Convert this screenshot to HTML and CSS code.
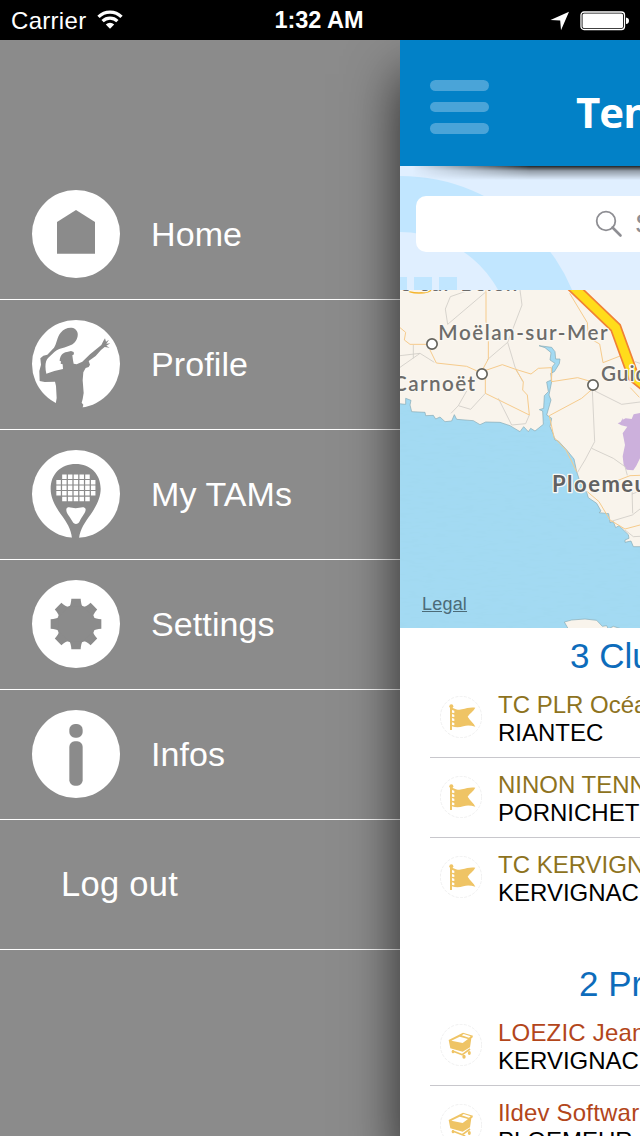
FILE: index.html
```
<!DOCTYPE html>
<html lang="en">
<head>
    <meta charset="UTF-8">
    <meta name="viewport" content="width=device-width, initial-scale=1.0">
    <title>Menu</title>
    <link rel="stylesheet" href="styles.css">
</head>
<body>
    <!-- Status bar -->
    <div class="status-bar">
        <div class="carrier">
            <span>Carrier</span>
            <svg width="26" height="20" viewBox="0 0 26 20">
                <path d="M1.5 6.8a16.3 16.3 0 0 1 23 0" fill="none" stroke="#fff" stroke-width="3.3"/>
                <path d="M5.6 11.2a10.6 10.6 0 0 1 14.8 0" fill="none" stroke="#fff" stroke-width="3.2"/>
                <path d="M8.8 14.5a6 6 0 0 1 8.4 0L13 18.8z" fill="#fff"/>
            </svg>
        </div>
        <span class="time">1:32 AM</span>
        <div class="indicators">
            <svg width="20" height="20" viewBox="0 0 20 20"><path d="M19 .8L.5 9l9.7.6.8 9.7z" fill="#fff"/></svg>
            <svg width="50" height="20" viewBox="0 0 50 20">
                <rect x="1" y="1" width="43.5" height="17.5" rx="3" fill="none" stroke="#fff" stroke-width="1.3"/>
                <rect x="2.5" y="2.5" width="40.5" height="14.5" rx="1.5" fill="#fff"/>
                <path d="M46 6.5q3 .5 3 3.3t-3 3.3z" fill="#fff"/>
            </svg>
        </div>
    </div>

    <div class="screen">
        <!-- Side menu -->
        <nav class="menu">
            <a class="menu-item" href="#">
                <svg class="menu-icon" viewBox="0 0 264 264">
                    <circle cx="132" cy="132" r="132" fill="#fff"/>
                    <path d="M132 60l57 36v95H75V96z" fill="#8b8b8b"/>
                </svg>
                <span>Home</span>
            </a>
            <a class="menu-item" href="#">
                <svg class="menu-icon" viewBox="0 0 264 264">
                    <circle cx="132" cy="132" r="132" fill="#fff"/>
                    <path d="M25 115L34 107L46 104L66 83C75 70 74 52 86 38C98 24 118 19 130 28C142 38 138 56 127 68C111 83 84 81 68 95L49 113C40 121 38 139 43 161L67 153L93 147L92 133L86 131L87 124L83 123C84 107 91 98 105 96L117 93L125 96L126 103L121 106L123 121L125 131L134 133L151 125L174 103L208 75L214 63L219 55L222 65L231 59L223 71L235 70L223 77L233 83L218 81L207 90L191 108L170 123L174 134L170 141L161 144L154 157L152 181L155 219L152 237L149 248L154 254L151 266L67 266L71 252L74 234L72 198L69 185L38 186L23 183L22 153L27 134Z" fill="#8b8b8b"/>
                </svg>
                <span>Profile</span>
            </a>
            <a class="menu-item" href="#">
                <svg class="menu-icon" viewBox="0 0 264 264">
                    <circle cx="132" cy="132" r="132" fill="#fff"/>
                    <path d="M120 266C118 238 105 218 86 192C65 162 56 139 56 116C56 72 87 42 131 42S206 72 206 116C206 139 197 162 177 192C158 218 144 238 141 266Z" fill="#8b8b8b"/>
                    <g stroke="#fff" stroke-width="13.5" stroke-dasharray="13.5 3.8">
                        <path d="M90.500 80h83"/>
                        <path d="M73 97h118M73 113.500h118M73 130h118"/>
                        <path d="M90.500 147h83"/>
                    </g>
                    <path d="M103 178C105 167 119 174 131 175C143 174 158 167 161 178C161 191 151 196 143 214C138 225 126 225 121 214C112 196 102 190 103 178Z" fill="#fff"/>
                </svg>
                <span>My TAMs</span>
            </a>
            <a class="menu-item" href="#">
                <svg class="menu-icon" viewBox="0 0 264 264">
                    <circle cx="132" cy="132" r="132" fill="#fff"/>
                    <g transform="translate(132 132)" fill="#8b8b8b">
                        <circle r="58"/>
                        <path id="tooth" d="M-20-52Q-15-59-14-76H14Q15-59 20-52z"/>
                        <use href="#tooth" transform="rotate(45)"/>
                        <use href="#tooth" transform="rotate(90)"/>
                        <use href="#tooth" transform="rotate(135)"/>
                        <use href="#tooth" transform="rotate(180)"/>
                        <use href="#tooth" transform="rotate(225)"/>
                        <use href="#tooth" transform="rotate(270)"/>
                        <use href="#tooth" transform="rotate(315)"/>
                    </g>
                </svg>
                <span>Settings</span>
            </a>
            <a class="menu-item" href="#">
                <svg class="menu-icon" viewBox="0 0 264 264">
                    <circle cx="132" cy="132" r="132" fill="#fff"/>
                    <rect x="112" y="42" width="40" height="41" rx="17" fill="#8b8b8b"/>
                    <rect x="112" y="94" width="40" height="133" rx="16" fill="#8b8b8b"/>
                </svg>
                <span>Infos</span>
            </a>
            <a class="menu-item logout" href="#">Log out</a>
        </nav>

        <!-- Main page, pushed to the right -->
        <main class="panel">
            <header class="header">
                <div class="burger"><i></i><i></i><i></i></div>
                <h1>Ten</h1>
            </header>

            <div class="search">
                <svg class="search-bg" width="240" height="124" viewBox="0 0 240 124">
                    <circle cx="0" cy="197" r="187" fill="#c1e6ff"/>
                    <circle cx="0" cy="178" r="112" fill="#e0efff"/>
                    <path d="M0 111h7v13H0zM14 111h18v13H14zM39 111h18v13H39z" fill="#c1e6ff"/>
                </svg>
                <div class="search-field">
                    <svg width="28" height="28" viewBox="0 0 28 28" fill="none" stroke="#8e8e93">
                        <circle cx="11" cy="11" r="9.300" stroke-width="1.800"/>
                        <path d="M17.500 17.500l8 8" stroke-width="2.600" stroke-linecap="round"/>
                    </svg>
                    <span>S</span>
                </div>
            </div>

            <div class="map">
                <svg width="240" height="338" viewBox="15 15 720 1014">
                    <defs>
                        <filter id="waves" x="0" y="0" width="100%" height="100%">
                            <feTurbulence type="fractalNoise" baseFrequency="0.025 0.12" numOctaves="2" seed="4"/>
                            <feColorMatrix values="0 0 0 0 .35  0 0 0 0 .68  0 0 0 0 .82  0 .5 0 0 -.14"/>
                        </filter>
                    </defs>
                    <rect x="15" y="15" width="720" height="1014" fill="#a3daf3"/>
                    <rect x="15" y="15" width="720" height="1014" filter="url(#waves)"/>

                    <!-- Land -->
                    <g fill="#f9f4ec" stroke="#86a9b3" stroke-width="2">
                        <path d="M10 10H740V785L715 785L708 768L690 772L690 765L702 760L700 749L672 722L662 728L655 710L645 713L641 686L612 683L618 678L605 655L580 638L575 622L555 590L545 560L537 522L515 495L490 468L480 465L475 448L465 425L470 400L455 390L468 345L462 330L470 290L467 265L478 260L493 236L495 222L482 222L480 200L470 187L432 182L450 188L468 203L465 225L480 235L472 245L469 285L455 291L460 320L448 332L446 370L433 374L443 378L445 418L420 438L407 430L400 440L386 425L375 440L345 422L315 412L272 411L255 419L235 407L185 403L178 389L170 408L150 410L135 396L122 402L115 391L92 392L90 382L50 380L45 360L48 346L32 340L32 358L10 356Z"/>
                        <path d="M508 1011L530 1005L570 1002L605 1006L622 1024L635 1022L640 1032L655 1024L680 1032H520Z"/>
                    </g>
                    <path d="M735 384L716 388L710 402L692 400L683 404L684 398L677 411L668 415L679 421L697 425L683 445L690 480L683 514L686 540L695 554L715 556L724 542L735 520Z" fill="#ccb0dc"/>

                    <!-- Minor roads -->
                    <g class="road minor">
                        <path d="M158 118L151 72L166 35L215 18M158 118L271 22M375 15L381 60L338 172L276 225M15 212L75 205L118 232M75 205L15 247M55 180V220M338 172L360 246L383 290M215 318L190 362L168 385M190 362L227 373L271 325M310 340L350 420L392 416L403 390M592 315L599 470L570 525L547 563M600 318L680 358L735 351M590 490L655 520L690 545L697 571M720 230L735 235M711 610L713 685M711 627L735 618M645 710L712 690L735 672M690 735L715 755L735 754"/>
                    </g>
                    <!-- Main roads -->
                    <g class="road main">
                        <path d="M273 15V110L280 150V222L262 255M15 128L32 142L28 165L45 178H100M105 195L124 234L215 244L255 262L322 239L362 253L408 267L430 250L469 248L470 290L548 278L590 290M271 280V325L403 390M362 253L385 290L383 315L397 330L403 390M592 312L560 340L463 392L477 457L513 495L545 560M524 25L577 113L580 158L614 177L624 233L678 212M733 337L706 308M659 590L705 572L735 571M577 620L612 650L645 705L690 732L735 720"/>
                    </g>
                    <ellipse cx="72" cy="12" rx="38" ry="12" fill="none" stroke="#f5b52c" stroke-width="4"/>

                    <!-- Motorway -->
                    <path d="M522 -6L662 128L715 274L752 304" fill="none" stroke="#f08136" stroke-width="36"/>
                    <path d="M522 -6L662 128L715 274L752 304" fill="none" stroke="#ffdc1b" stroke-width="26"/>

                    <g fill="#fff" stroke="#64635d" stroke-width="5">
                        <circle cx="111" cy="177" r="15.500"/>
                        <circle cx="261" cy="267" r="15.500"/>
                        <circle cx="594" cy="300" r="15.500"/>
                    </g>
                    <g class="town">
                        <text x="15" y="17" textLength="352">e-sur-Belon</text>
                        <text x="130" y="165" textLength="508">Moëlan-sur-Mer</text>
                        <text x="-6" y="318" textLength="246">Carnoët</text>
                        <text x="618" y="289" letter-spacing="3">Guid</text>
                        <text class="big" x="471" y="621" letter-spacing="4.500">Ploemeu</text>
                    </g>
                </svg>
                <a class="legal" href="#">Legal</a>
            </div>

            <!-- Shared list icons -->
            <svg class="symbols">
                <symbol id="flag" viewBox="0 0 126 126">
                    <circle cx="63" cy="63" r="62" fill="none" stroke="#e8e8e8" stroke-width="2" stroke-dasharray="9 4"/>
                    <circle cx="34" cy="31" r="6" fill="#efc465"/>
                    <path d="M30 33h6v69h-6z" fill="#efc465"/>
                    <path d="M36 35C48 40 56 43 66 40C80 36 92 33 106 35C101 45 88 53 83 62C90 73 102 82 106 92C94 89 82 87 70 91C58 95 46 95 36 91Z" fill="#efc465"/>
                    <path d="M36 42l7 2v7l-7-1zM36 54l7 2v7l-7-1zM36 66l7 2v7l-7-1zM36 79l7 2v7l-7-1z" fill="#fff"/>
                </symbol>
                <symbol id="cart" viewBox="0 0 126 126">
                    <circle cx="63" cy="63" r="62" fill="none" stroke="#e8e8e8" stroke-width="2" stroke-dasharray="9 4"/>
                    <path d="M26 48L69 26L99 35L97 41L94 43L90 70L68 83L31 73Z" fill="#efc465"/>
                    <path d="M34 50L59 38L84 45L68 57ZM65 34L71 30L92 37L87 41Z" fill="#fff"/>
                    <path d="M36 80L67 92L90 75" fill="none" stroke="#efc465" stroke-width="5" stroke-linejoin="round"/>
                    <ellipse cx="39" cy="83" rx="4" ry="5" fill="#efc465"/>
                    <ellipse cx="72" cy="98" rx="5" ry="6" fill="#efc465"/>
                    <ellipse cx="88" cy="87" rx="4.500" ry="6" fill="#efc465"/>
                </symbol>
            </svg>

            <section class="list clubs">
                <h2>3 Clu</h2>
                <div class="row">
                    <svg class="row-icon"><use href="#flag"/></svg>
                    <div class="row-text"><p class="name">TC PLR Océa</p><p>RIANTEC</p></div>
                </div>
                <div class="row">
                    <svg class="row-icon"><use href="#flag"/></svg>
                    <div class="row-text"><p class="name">NINON TENN</p><p>PORNICHET</p></div>
                </div>
                <div class="row">
                    <svg class="row-icon"><use href="#flag"/></svg>
                    <div class="row-text"><p class="name">TC KERVIGN</p><p>KERVIGNAC</p></div>
                </div>
            </section>

            <section class="list pros">
                <h2>2 Pr</h2>
                <div class="row">
                    <svg class="row-icon"><use href="#cart"/></svg>
                    <div class="row-text"><p class="name">LOEZIC Jean</p><p>KERVIGNAC</p></div>
                </div>
                <div class="row">
                    <svg class="row-icon"><use href="#cart"/></svg>
                    <div class="row-text"><p class="name">Ildev Softwar</p><p>PLOEMEUR</p></div>
                </div>
            </section>
        </main>
    </div>
</body>
</html>
```

FILE: styles.css
```
* {
    box-sizing: border-box;
}

body {
    font-family: "Liberation Sans", Arial, sans-serif;
    margin: 0;
    width: 640px;
    height: 1136px;
    overflow: hidden;
    display: flex;
    flex-direction: column;
    background: #8b8b8b;
}

svg {
    display: block;
    flex-shrink: 0;
}

/* Status bar */
.status-bar {
    position: relative;
    z-index: 2;
    height: 40px;
    flex-shrink: 0;
    background: #000;
    color: #fff;
    display: grid;
    grid-template-columns: 1fr auto 1fr;
    align-items: center;
    padding: 1px 10px 0 11px;
    font-size: 24px;
}

.carrier {
    display: flex;
    align-items: center;
    gap: 11px;
    letter-spacing: 0.3px;
}

.carrier svg {
    margin-bottom: 2px;
}

.time {
    font-size: 23.5px;
    font-weight: bold;
    margin-right: 3px;
}

.indicators {
    display: flex;
    align-items: center;
    justify-content: flex-end;
    gap: 10px;
}

.screen {
    display: flex;
    flex: 1;
    min-height: 0;
}

/* Side menu */
.menu {
    width: 400px;
    flex-shrink: 0;
    padding-top: 130px;
}

.menu-item {
    height: 130px;
    padding-left: 32px;
    display: flex;
    align-items: center;
    gap: 31px;
    border-bottom: 1px solid #fff;
    color: #fff;
    font-size: 34px;
    letter-spacing: 0.1px;
    text-decoration: none;
}

.menu-icon {
    width: 88px;
    height: 88px;
    margin-bottom: 1px;
}

.logout {
    padding-left: 61px;
    font-size: 34.5px;
    letter-spacing: 0.3px;
}

/* Main page */
.panel {
    position: relative;
    z-index: 1;
    width: 240px;
    flex-shrink: 0;
    height: 1096px;
    background: #fff;
    box-shadow: 0 34px 50px rgba(0, 0, 0, 0.7);
    white-space: nowrap;
}

.header {
    position: relative;
    z-index: 1;
    height: 126px;
    background: #0281c7;
    display: flex;
    align-items: flex-start;
    padding: 40px 0 0 30px;
}

.header::after {
    content: "";
    position: absolute;
    left: 0;
    top: 126px;
    width: 240px;
    height: 14px;
    background: linear-gradient(rgba(0, 0, 0, 0.85), rgba(0, 0, 0, 0.35) 35%, transparent);
    -webkit-mask-image: linear-gradient(to right, transparent 12px, #000 130px);
    mask-image: linear-gradient(to right, transparent 12px, #000 130px);
}

.burger {
    display: flex;
    flex-direction: column;
    flex-shrink: 0;
    gap: 11px;
    width: 59px;
}

.burger i {
    height: 10.5px;
    border-radius: 6px;
    background: #4aa4d8;
}

.header h1 {
    margin: 4px 0 0 87px;
    font: bold 42px/56px "Open Sans", sans-serif;
    letter-spacing: -1px;
    color: #fff;
}

.search {
    position: relative;
    height: 124px;
    padding: 30px 0 0 16px;
    background: #e0efff;
    overflow: hidden;
}

.search-bg {
    position: absolute;
    left: 0;
    top: 0;
}

.search-field {
    position: relative;
    height: 56px;
    width: 608px;
    padding-left: 179px;
    display: flex;
    align-items: center;
    gap: 12px;
    border-radius: 10px;
    background: #fff;
    color: #8e8e93;
    font-size: 28px;
}

/* Map */
.map {
    position: relative;
    height: 338px;
    overflow: hidden;
}

.road {
    fill: none;
    stroke-width: 2.5;
    stroke-linejoin: round;
}

.minor {
    stroke: #d0cdc6;
}

.main {
    stroke: #f6cb8c;
    stroke-width: 3;
}

.town {
    font-family: Lato, sans-serif;
    font-size: 62px;
    font-weight: 600;
    fill: #6d6c6a;
    stroke: #fbf8f2;
    stroke-width: 8;
    stroke-linejoin: round;
    paint-order: stroke;
}

.town .big {
    font-size: 66px;
    font-weight: 700;
    fill: #626262;
}

.legal {
    position: absolute;
    left: 22px;
    bottom: 14px;
    font-size: 18px;
    line-height: 20px;
    letter-spacing: 0.2px;
    color: #4c6b78;
}

/* Lists */
.symbols {
    position: absolute;
    width: 0;
    height: 0;
}

.list {
    overflow: hidden;
}

.list h2 {
    margin: 0;
    height: 50px;
    padding: 7px 0 0 170px;
    font-size: 35px;
    font-weight: normal;
    line-height: 42px;
    color: #0d6cbb;
}

.pros {
    margin-top: 38px;
}

.pros h2 {
    padding-left: 179px;
}

.row {
    height: 80px;
    margin-left: 30px;
    padding-left: 10px;
    display: flex;
    gap: 16px;
    border-bottom: 1px solid #c8c7cc;
}

.row:last-child {
    border-bottom: none;
}

.row-icon {
    width: 42px;
    height: 42px;
    margin-top: 18px;
}

.row-text {
    padding-top: 13px;
    font-size: 24px;
    line-height: 28px;
}

.row-text p {
    margin: 0;
}

.clubs .name {
    color: #8e731e;
}

.pros .name {
    color: #b3461b;
    letter-spacing: 0.2px;
}
```
